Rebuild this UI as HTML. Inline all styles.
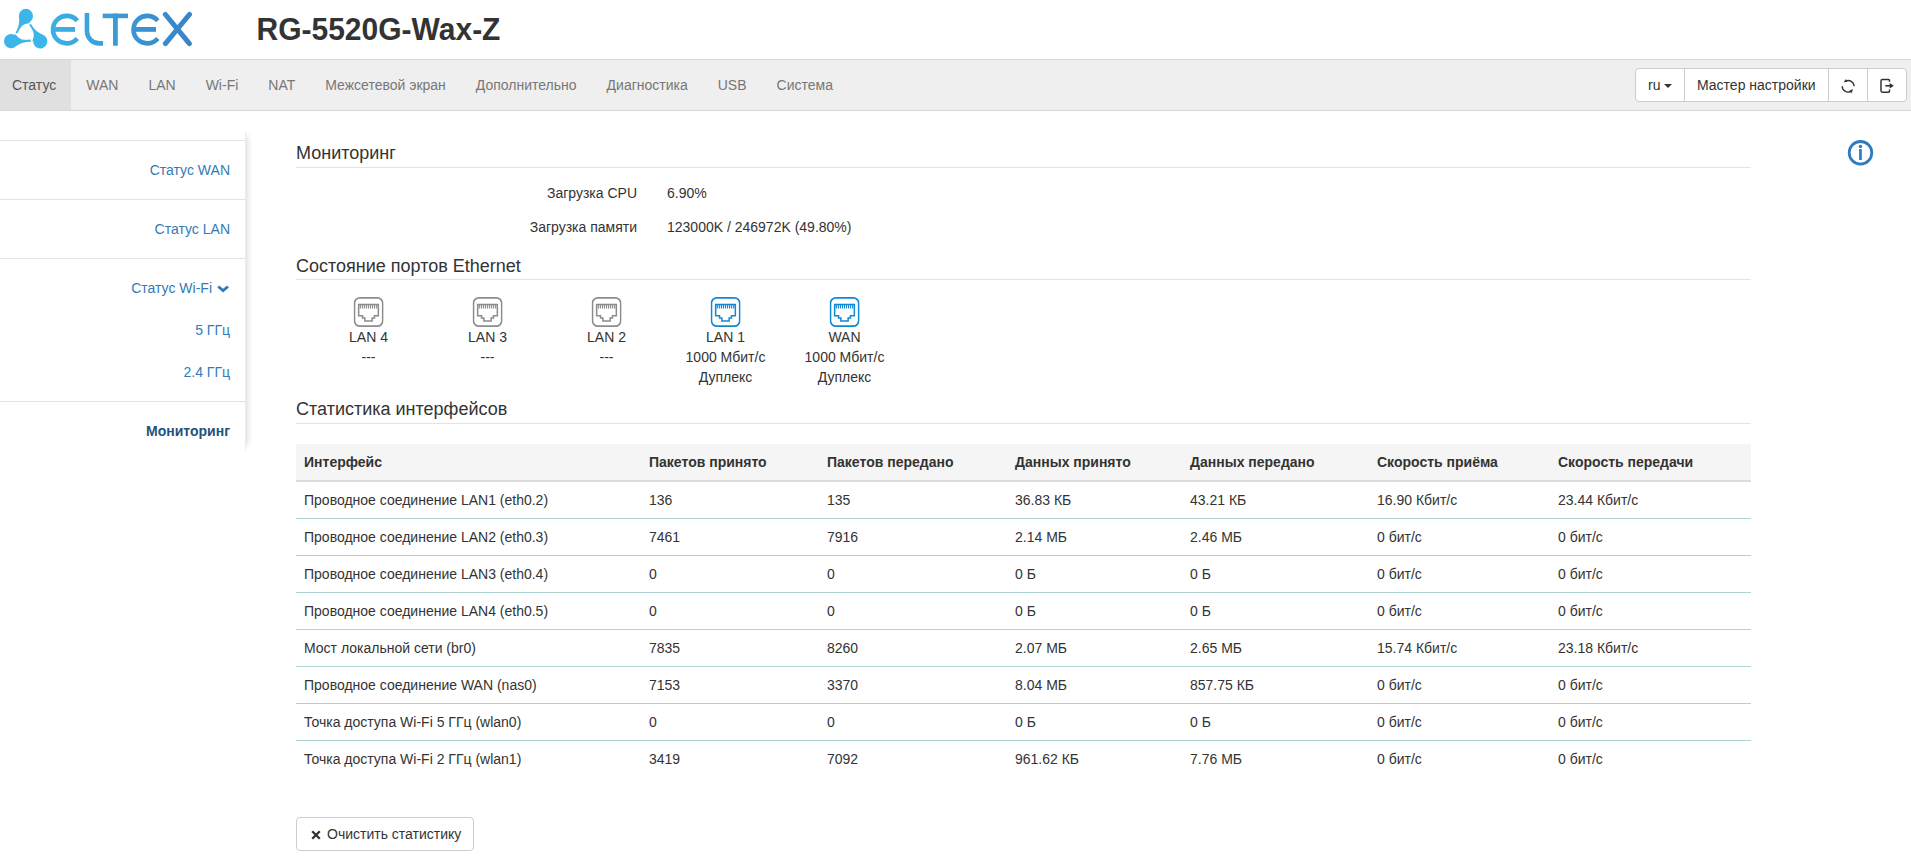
<!DOCTYPE html>
<html><head><meta charset="utf-8">
<style>
*{box-sizing:border-box;}
html,body{margin:0;padding:0;background:#fff;}
body{width:1911px;height:863px;overflow:hidden;position:relative;font-family:"Liberation Sans",sans-serif;font-size:14px;line-height:20px;color:#333;}
.abs{position:absolute;}
#logo{left:0;top:0;}
#title{left:256.5px;top:12px;font-size:30px;font-weight:bold;line-height:36px;color:#333;white-space:nowrap;transform:scaleY(1.035);transform-origin:0 28.4px;}
#nav{left:0;top:59px;width:1911px;height:52px;background:#efefef;border-top:1px solid #d6d6d6;border-bottom:1px solid #d6d6d6;}
#nav .navul{position:absolute;left:-3px;top:0;height:50px;display:flex;white-space:nowrap;}
#nav .it{display:block;padding:15px;height:50px;line-height:20px;color:#777;}
#nav .act{background:#e0e0e0;color:#555;}
#btns{left:1635px;top:68px;height:34px;width:272px;border:1px solid #ccc;border-radius:4px;background:#fff;}
#btns .seg{position:absolute;top:0;height:32px;border-left:1px solid #ccc;}
#side{left:0;top:131px;width:245px;height:320px;background:#fff;}
#shclip{left:245px;top:131px;width:14px;height:320px;overflow:hidden;}
#shclip .sh{position:absolute;left:-30px;top:5px;width:30px;height:309px;background:#fff;box-shadow:2px 0 6px rgba(0,0,0,.17);}
#shclip .bl{position:absolute;left:0;top:0;width:1px;height:320px;background:#ececec;}
#side .ln{position:absolute;left:0;width:245px;height:1px;background:#e2e2e2;}
#side .tx{position:absolute;right:15px;color:#337ab7;white-space:nowrap;line-height:20px;}
h3{margin:0;position:absolute;font-weight:normal;font-size:18px;line-height:22px;color:#333;white-space:nowrap;}
.hr{position:absolute;left:296px;width:1455px;height:1px;background:#e4e4e4;}
.lbl{position:absolute;white-space:nowrap;text-align:right;}
.val{position:absolute;white-space:nowrap;}
.port{position:absolute;width:119px;text-align:center;top:297px;}
.port .ic{transform:translateX(-0.4px);}
.port .ic{display:block;width:30px;height:30px;margin:0 auto 0 auto;}
table{position:absolute;left:296px;top:444px;width:1455px;border-collapse:collapse;table-layout:fixed;}
th{background:#f5f5f5;text-align:left;font-weight:bold;height:37px;padding:0 8px;border-bottom:2px solid #dbdbdb;}
td{height:37px;padding:0 8px;border-top:1px solid #b0d2d3;}
tr.r1 td{border-top:none;}
#clr{left:296px;top:817px;width:178px;height:34px;border:1px solid #ccc;border-radius:4px;background:#fff;}
</style></head><body>

<svg width="0" height="0" style="position:absolute"><defs>
<g id="rj" stroke-width="2"><rect x="0.85" y="0.85" width="28.3" height="28.3" rx="5.5" ry="5.5" stroke-width="1.7"/><path d="M5.05 7.45 H24.75 V18.85 H20.85 V21.05 H18.55 V24.05 H11.25 V21.05 H8.95 V18.85 H5.05 Z" stroke-width="1.5"/><path d="M6.70 8 V11.4 M8.75 8 V11.4 M10.80 8 V11.4 M12.85 8 V11.4 M14.90 8 V11.4 M16.95 8 V11.4 M19.00 8 V11.4 M21.05 8 V11.4 M23.10 8 V11.4" stroke-width="1.15"/></g>
</defs></svg>
<svg id="logo" class="abs" width="200" height="59" viewBox="0 0 200 59">
  <defs>
    <linearGradient id="lg" x1="0" y1="0" x2="195" y2="0" gradientUnits="userSpaceOnUse">
      <stop offset="0" stop-color="#3dbbea"/>
      <stop offset="0.3" stop-color="#3aaee2"/>
      <stop offset="1" stop-color="#3a82c6"/>
    </linearGradient>
    <g id="drop"><circle cx="25.9" cy="15.9" r="7.1"/><path d="M19.06 17.5 C19.8 22 18.5 28 15.5 32.8 L17.4 33.6 C19.5 29 21.5 25.5 24.5 24.3 C27 23.5 29 23 30.5 22.4 Z"/></g>
  </defs>
  <g fill="#3cb6e8">
    <use href="#drop"/>
    <use href="#drop" transform="rotate(120 25.77 32.77)"/>
    <use href="#drop" transform="rotate(240 25.77 32.77)"/>
  </g>
  <g fill="none" stroke="url(#lg)" stroke-width="4.6">
    <path d="M77.24 20.76 A13.75 13.75 0 1 0 77.24 38.54"/>
    <path d="M157.74 20.76 A13.75 13.75 0 1 0 157.74 38.54"/>
    <path d="M86.95 13.1 V31 A12.4 12.4 0 0 0 99.35 43.4 H103"/>
  </g>
  <g fill="url(#lg)">
    <rect x="53" y="27" width="22" height="4.8"/>
    <rect x="133.5" y="27" width="22.5" height="4.8"/>
    <rect x="102.7" y="13.6" width="25.3" height="4.6"/>
    <rect x="113" y="13.6" width="4.8" height="32.1"/>
  </g>
  <g stroke="url(#lg)" stroke-width="5.1" stroke-linecap="round">
    <path d="M165.4 14.5 L189.4 43.6"/>
    <path d="M189.4 14.5 L165.4 43.6"/>
  </g>
</svg>
<div id="title" class="abs">RG-5520G-Wax-Z</div>

<div id="nav" class="abs">
  <div class="navul">
  <span class="it act">Статус</span><span class="it">WAN</span><span class="it">LAN</span><span class="it">Wi-Fi</span><span class="it">NAT</span><span class="it">Межсетевой экран</span><span class="it">Дополнительно</span><span class="it">Диагностика</span><span class="it">USB</span><span class="it">Система</span>
  </div>
</div>
<div id="btns" class="abs">
  <span class="abs" style="left:12px;top:6px;line-height:20px;">ru</span>
  <span class="abs" style="left:28px;top:15px;width:0;height:0;border-left:4px solid transparent;border-right:4px solid transparent;border-top:4px solid #333;"></span>
  <div class="seg" style="left:48px;width:144px;"><span class="abs" style="left:12px;top:6px;white-space:nowrap">Мастер настройки</span></div>
  <div class="seg" style="left:192px;width:39px;"></div>
  <div class="seg" style="left:231px;width:40px;"></div>
  <svg class="abs" style="left:203px;top:8px" width="20" height="18" viewBox="0 0 20 18"><g fill="none" stroke="#333" stroke-width="1.4"><path d="M6.6 4.2 A6 6 0 0 1 15.2 9.2"/><path d="M3.2 9.2 A6 6 0 0 0 11.6 14.6"/></g><path d="M4.6 5.3 L6.9 1.9 L8.1 4.8 Z" fill="#333"/><path d="M14 12.1 L12.8 15.9 L9.9 13.9 Z" fill="#333"/></svg>
  <svg class="abs" style="left:243px;top:8px" width="18" height="18" viewBox="0 0 18 18"><path d="M10.5 4.8 V3.4 Q10.5 2.5 9.6 2.5 H3.4 Q2 2.5 2 3.9 V13.8 Q2 15.2 3.4 15.2 H9.6 Q10.5 15.2 10.5 14.3 V12.6" fill="none" stroke="#333" stroke-width="1.5"/><path d="M6.3 8.8 H11.7" stroke="#333" stroke-width="1.6"/><path d="M10.7 6.1 L14.9 8.8 L10.7 11.5 Z" fill="#333"/></svg>
</div>

<div id="shclip" class="abs"><div class="sh"></div><div class="bl"></div></div>
<div id="side" class="abs">
  <div class="ln" style="top:9px"></div>
  <span class="tx" style="top:29px">Статус WAN</span>
  <div class="ln" style="top:68px"></div>
  <span class="tx" style="top:88px">Статус LAN</span>
  <div class="ln" style="top:127px"></div>
  <span class="tx" style="top:147px;right:33px">Статус Wi-Fi</span>
  <svg class="abs" style="left:216px;top:152px" width="14" height="10" viewBox="0 0 14 10"><path d="M2.2 3.5 L7.1 7.6 L12 3.5" fill="none" stroke="#337ab7" stroke-width="2.9"/></svg>
  <span class="tx" style="top:189px">5 ГГц</span>
  <span class="tx" style="top:231px">2.4 ГГц</span>
  <div class="ln" style="top:270px"></div>
  <span class="tx" style="top:290px;font-weight:bold;color:#23527c">Мониторинг</span>
</div>

<h3 style="left:296px;top:142px">Мониторинг</h3>
<div class="hr" style="top:167px"></div>
<div class="lbl" style="right:1274px;top:183px">Загрузка CPU</div>
<div class="val" style="left:667px;top:183px">6.90%</div>
<div class="lbl" style="right:1274px;top:217px">Загрузка памяти</div>
<div class="val" style="left:667px;top:217px">123000K / 246972K (49.80%)</div>

<h3 style="left:296px;top:255px">Состояние портов Ethernet</h3>
<div class="hr" style="top:279px"></div>

<div class="port" style="left:309px"><svg class="ic" viewBox="0 0 30 30"><use href="#rj" stroke="#8c8c8c" fill="none"/></svg>LAN 4<br>---</div>
<div class="port" style="left:428px"><svg class="ic" viewBox="0 0 30 30"><use href="#rj" stroke="#8c8c8c" fill="none"/></svg>LAN 3<br>---</div>
<div class="port" style="left:547px"><svg class="ic" viewBox="0 0 30 30"><use href="#rj" stroke="#8c8c8c" fill="none"/></svg>LAN 2<br>---</div>
<div class="port" style="left:666px"><svg class="ic" viewBox="0 0 30 30"><use href="#rj" stroke="#1188d6" fill="none"/></svg>LAN 1<br>1000 Мбит/с<br>Дуплекс</div>
<div class="port" style="left:785px"><svg class="ic" viewBox="0 0 30 30"><use href="#rj" stroke="#1188d6" fill="none"/></svg>WAN<br>1000 Мбит/с<br>Дуплекс</div>

<h3 style="left:296px;top:398px">Статистика интерфейсов</h3>
<div class="hr" style="top:423px"></div>


<table>
<colgroup><col style="width:345px"><col style="width:178px"><col style="width:188px"><col style="width:175px"><col style="width:187px"><col style="width:181px"><col></colgroup>
<tr><th>Интерфейс</th><th>Пакетов принято</th><th>Пакетов передано</th><th>Данных принято</th><th>Данных передано</th><th>Скорость приёма</th><th>Скорость передачи</th></tr>
<tr class="r1"><td>Проводное соединение LAN1 (eth0.2)</td><td>136</td><td>135</td><td>36.83 КБ</td><td>43.21 КБ</td><td>16.90 Кбит/с</td><td>23.44 Кбит/с</td></tr>
<tr><td>Проводное соединение LAN2 (eth0.3)</td><td>7461</td><td>7916</td><td>2.14 МБ</td><td>2.46 МБ</td><td>0 бит/с</td><td>0 бит/с</td></tr>
<tr><td>Проводное соединение LAN3 (eth0.4)</td><td>0</td><td>0</td><td>0 Б</td><td>0 Б</td><td>0 бит/с</td><td>0 бит/с</td></tr>
<tr><td>Проводное соединение LAN4 (eth0.5)</td><td>0</td><td>0</td><td>0 Б</td><td>0 Б</td><td>0 бит/с</td><td>0 бит/с</td></tr>
<tr><td>Мост локальной сети (br0)</td><td>7835</td><td>8260</td><td>2.07 МБ</td><td>2.65 МБ</td><td>15.74 Кбит/с</td><td>23.18 Кбит/с</td></tr>
<tr><td>Проводное соединение WAN (nas0)</td><td>7153</td><td>3370</td><td>8.04 МБ</td><td>857.75 КБ</td><td>0 бит/с</td><td>0 бит/с</td></tr>
<tr><td>Точка доступа Wi-Fi 5 ГГц (wlan0)</td><td>0</td><td>0</td><td>0 Б</td><td>0 Б</td><td>0 бит/с</td><td>0 бит/с</td></tr>
<tr><td>Точка доступа Wi-Fi 2 ГГц (wlan1)</td><td>3419</td><td>7092</td><td>961.62 КБ</td><td>7.76 МБ</td><td>0 бит/с</td><td>0 бит/с</td></tr>
</table>


<div id="clr" class="abs"><svg class="abs" style="left:14px;top:12px" width="10" height="10" viewBox="0 0 10 10"><path d="M1.2 1.2 L8.8 8.8 M8.8 1.2 L1.2 8.8" stroke="#333" stroke-width="2.3"/></svg><span class="abs" style="left:30px;top:6px;white-space:nowrap">Очистить статистику</span></div>
<svg class="abs" style="left:1847px;top:140px" width="27" height="27" viewBox="0 0 27 27"><circle cx="13.5" cy="12.8" r="11.3" fill="none" stroke="#2e7bbf" stroke-width="2.8"/><circle cx="13.45" cy="6.45" r="1.75" fill="#2e7bbf"/><rect x="12.1" y="9.1" width="2.7" height="11" rx="0.6" fill="#2e7bbf"/></svg>
</body></html>
